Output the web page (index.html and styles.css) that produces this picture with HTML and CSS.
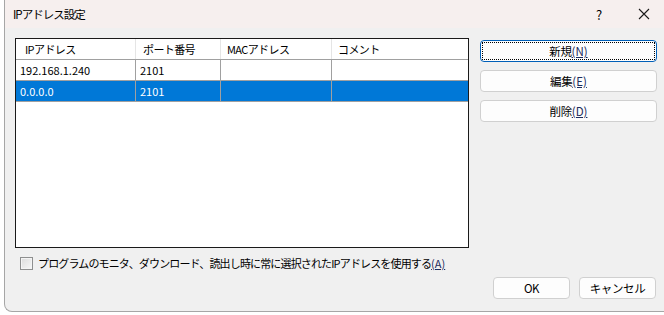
FILE: index.html
```html
<!DOCTYPE html>
<html lang="ja">

<head>
    <meta charset="UTF-8">
    <meta name="viewport" content="width=device-width, initial-scale=1.0">
    <title>IPアドレス設定</title>
    <link rel="stylesheet" href="styles.css">
</head>

<body>
    <div class="window">
        <!-- タイトルバー -->
        <div class="titlebar">
            <span class="title">IPアドレス設定</span>
            <span class="help">?</span>
            <span class="close">
                <svg width="12" height="12" viewBox="0 0 12 12">
                    <path d="M1 1 L11 11 M11 1 L1 11" stroke="#1a1a1a" stroke-width="1.1" fill="none" />
                </svg>
            </span>
        </div>

        <div class="content">
            <div class="main">
                <div class="list">
                    <div class="row header">
                        <div class="cell c1">IPアドレス</div>
                        <div class="cell c2">ポート番号</div>
                        <div class="cell c3">MACアドレス</div>
                        <div class="cell c4">コメント</div>
                    </div>
                    <div class="row">
                        <div class="cell c1 num">192.168.1.240</div>
                        <div class="cell c2 num">2101</div>
                        <div class="cell c3"></div>
                        <div class="cell c4"></div>
                    </div>
                    <div class="row selected">
                        <div class="cell c1 num">0.0.0.0</div>
                        <div class="cell c2 num">2101</div>
                        <div class="cell c3"></div>
                        <div class="cell c4"></div>
                    </div>
                </div>

                <div class="side">
                    <button class="btn default"><span class="focus">新規<u>(N)</u></span></button>
                    <button class="btn">編集<u>(E)</u></button>
                    <button class="btn">削除<u>(D)</u></button>
                </div>
            </div>

            <label class="check">
                <span class="box"></span>
                <span class="check-text">プログラムのモニタ、ダウンロード、読出し時に常に選択されたIPアドレスを使用する<u>(A)</u></span>
            </label>

            <div class="footer">
                <button class="btn small">OK</button>
                <button class="btn small">キャンセル</button>
            </div>
        </div>
    </div>
</body>

</html>
```

FILE: styles.css
```css
body {
    margin: 0;
    padding: 0;
    background-color: #ffffff;
    font-family: 'Noto Sans CJK JP', 'Noto Sans', sans-serif;
    font-size: 11px;
    letter-spacing: -0.6px;
    color: #000;
    overflow: hidden;
}

.window {
    margin-left: 4px;
    width: 680px;
    height: 311px;
    background-color: #f0f0f0;
    border-left: 1px solid #a6a6a6;
    border-bottom: 1px solid #a6a6a6;
    border-bottom-left-radius: 8px;
    overflow: hidden;
}

.titlebar {
    height: 28px;
    background-color: #f6efee;
    display: flex;
    align-items: center;
    padding-left: 8px;
}

.title {
    font-size: 11.5px;
    letter-spacing: -1px;
    flex: 1;
}

.help {
    width: 12px;
    font-size: 13px;
    margin-right: 30px;
}

.close {
    display: flex;
    margin-right: 35px;
}

.content {
    padding: 10px 0 0 10px;
}

.main {
    display: flex;
    gap: 11px;
}

/* リスト */
.list {
    width: 452px;
    height: 208px;
    background-color: #fff;
    border: 1px solid #1a1a1a;
}

.row {
    display: flex;
    height: 20px;
    border-bottom: 1px solid #a0a0a0;
}

.cell {
    height: 20px;
    line-height: 20px;
    padding-left: 4px;
    box-sizing: border-box;
    border-right: 1px solid #a0a0a0;
    white-space: nowrap;
}

.num {
    letter-spacing: 0;
}

.c1 { width: 120px; }
.c2 { width: 85px; }
.c3 { width: 111px; }
.c4 { width: 136px; border-right: none; }

.header .cell {
    border-right-color: #e5e5e5;
    padding-left: 6px;
}

.header .c1 { padding-left: 9px; }
.header .c2 { padding-left: 7px; }

.selected {
    background-color: #0078d7;
    color: #fff;
}

/* ボタン */
.side {
    display: flex;
    flex-direction: column;
    gap: 8px;
    padding-top: 2px;
}

.btn {
    width: 177px;
    height: 22px;
    padding: 0;
    font-family: 'Noto Sans CJK JP', 'Noto Sans', sans-serif;
    font-size: 11.5px;
    letter-spacing: -0.4px;
    color: #000;
    background-color: #fdfdfd;
    border: 1px solid #d0d0d0;
    border-radius: 4px;
}

.btn u {
    color: #1c2c5c;
    letter-spacing: 0;
}

.btn.default {
    border: 1px solid #005fb8;
    padding: 1px;
}

.focus {
    display: block;
    height: 16px;
    line-height: 16px;
    border: 1px dotted #000;
}

.check {
    display: flex;
    align-items: center;
    gap: 5px;
    margin: 7px 0 0 5px;
    height: 16px;
}

.check-text {
    letter-spacing: -0.85px;
}

.check u {
    color: #1c2c5c;
    letter-spacing: 0;
}

.box {
    width: 11px;
    height: 11px;
    border: 1px solid #8e8f8f;
    background: linear-gradient(135deg, #dcdcdc, #f7f7f7);
    box-shadow: inset 0 0 0 1px #f4f4f4;
}

.footer {
    display: flex;
    gap: 9px;
    margin: 6px 0 0 478px;
}

.btn.small {
    width: 77px;
}
```
